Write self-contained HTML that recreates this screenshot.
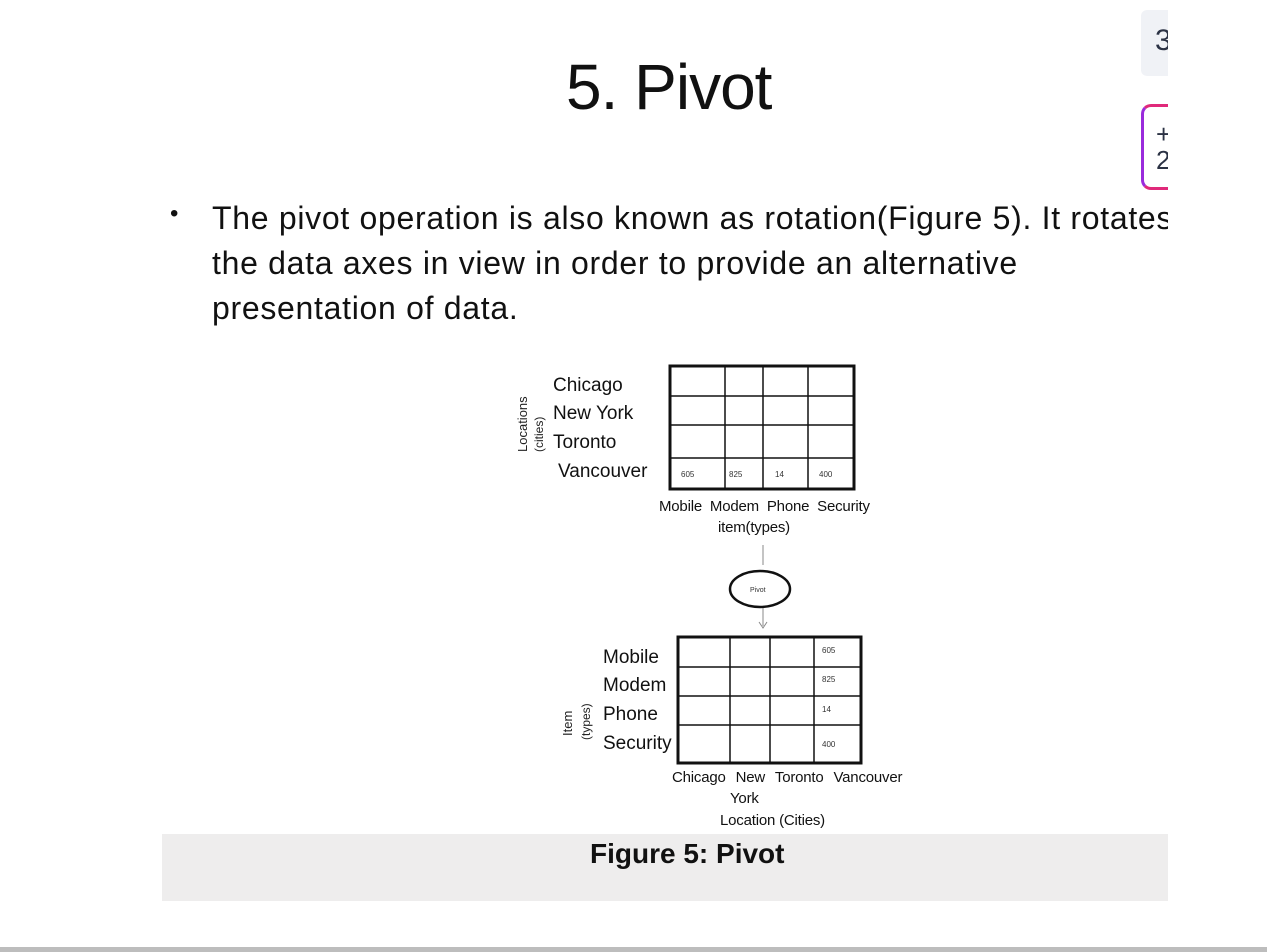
<!DOCTYPE html>
<html><head><meta charset="utf-8"><style>
*{margin:0;padding:0;box-sizing:border-box}
body{width:1267px;height:952px;background:#fff;position:relative;overflow:hidden;font-family:"Liberation Sans",sans-serif;color:#111}
.a{position:absolute;white-space:nowrap}
.sm{font-size:15px;letter-spacing:-0.2px}
.lg{font-size:19px;letter-spacing:0}
</style></head><body>
<div class="a" style="left:1141px;top:10px;width:27px;height:66px;background:#f0f2f6;border-radius:6px 0 0 6px;overflow:hidden"><div style="position:absolute;left:14px;top:14px;font-size:30px;color:#2b3244">3</div></div>
<div class="a" style="left:1141px;top:104px;width:27px;height:86px;border:3px solid #e0297a;border-right:none;border-radius:10px 0 0 10px;border-left-color:#9a2bdc;overflow:hidden"><div style="position:absolute;left:12px;top:14px;font-size:26px;color:#2b3244;line-height:26px">+<br>2</div></div>

<div class="a" style="left:566px;top:50px;font-size:64px;letter-spacing:-1px;color:#111">5. Pivot</div>
<div class="a" style="left:170px;top:200px;font-size:24px">•</div>
<div class="a" style="left:212px;top:196px;width:956px;overflow:hidden;font-size:32px;line-height:45px;letter-spacing:0.7px;color:#111">The pivot operation is also known as rotation(Figure 5). It rotates<br>the data axes in view in order to provide an alternative<br>presentation of data.</div>

<svg class="a" style="left:0;top:0" width="1267" height="952">
<g stroke="#111" fill="none">
<rect x="670" y="366" width="184" height="123" stroke-width="3"/>
<path d="M725 366V489M763 366V489M808 366V489M670 396H854M670 425H854M670 458H854" stroke-width="1.5"/>
<rect x="678" y="637" width="183" height="126" stroke-width="3"/>
<path d="M730 637V763M770 637V763M814 637V763M678 667H861M678 696H861M678 725H861" stroke-width="1.5"/>
<line x1="763" y1="545" x2="763" y2="565" stroke="#888"/>
<ellipse cx="760" cy="589" rx="30" ry="18" stroke-width="2.5"/>
<path d="M763 608V626M759 622L763 628L767 622" stroke="#888"/>
</g>
<g font-family="Liberation Sans" font-size="8" fill="#333">
<text x="681" y="477">605</text><text x="729" y="477">825</text><text x="775" y="477">14</text><text x="819" y="477">400</text>
<text x="822" y="653">605</text><text x="822" y="682">825</text><text x="822" y="712">14</text><text x="822" y="747">400</text>
<text x="750" y="592" font-size="7">Pivot</text>
</g>
<g font-family="Liberation Sans" font-size="13" fill="#222">
<text transform="translate(527,452) rotate(-90)">Locations</text>
<text transform="translate(543,452) rotate(-90)" font-size="12">(cities)</text>
<text transform="translate(572,736) rotate(-90)">Item</text>
<text transform="translate(590,740) rotate(-90)" font-size="12">(types)</text>
</g>
</svg>

<div class="a lg" style="left:553px;top:375px">Chicago</div>
<div class="a lg" style="left:553px;top:403px">New York</div>
<div class="a lg" style="left:553px;top:432px">Toronto</div>
<div class="a lg" style="left:558px;top:461px">Vancouver</div>
<div class="a sm" style="left:659px;top:498px;word-spacing:0px">Mobile &nbsp;Modem &nbsp;Phone &nbsp;Security</div>
<div class="a sm" style="left:718px;top:519px">item(types)</div>

<div class="a lg" style="left:603px;top:647px">Mobile</div>
<div class="a lg" style="left:603px;top:675px">Modem</div>
<div class="a lg" style="left:603px;top:704px">Phone</div>
<div class="a lg" style="left:603px;top:733px">Security</div>
<div class="a sm" style="left:672px;top:769px;word-spacing:1px">Chicago &nbsp;New &nbsp;Toronto &nbsp;Vancouver</div>
<div class="a sm" style="left:730px;top:790px">York</div>
<div class="a sm" style="left:720px;top:812px">Location (Cities)</div>

<div class="a" style="left:162px;top:834px;width:1006px;height:67px;background:#eeeded"></div>
<div class="a" style="left:590px;top:838px;font-size:28px;font-weight:bold;letter-spacing:0px">Figure 5: Pivot</div>
<div class="a" style="left:0;top:947px;width:1267px;height:5px;background:#bdbdbd"></div>
</body></html>
